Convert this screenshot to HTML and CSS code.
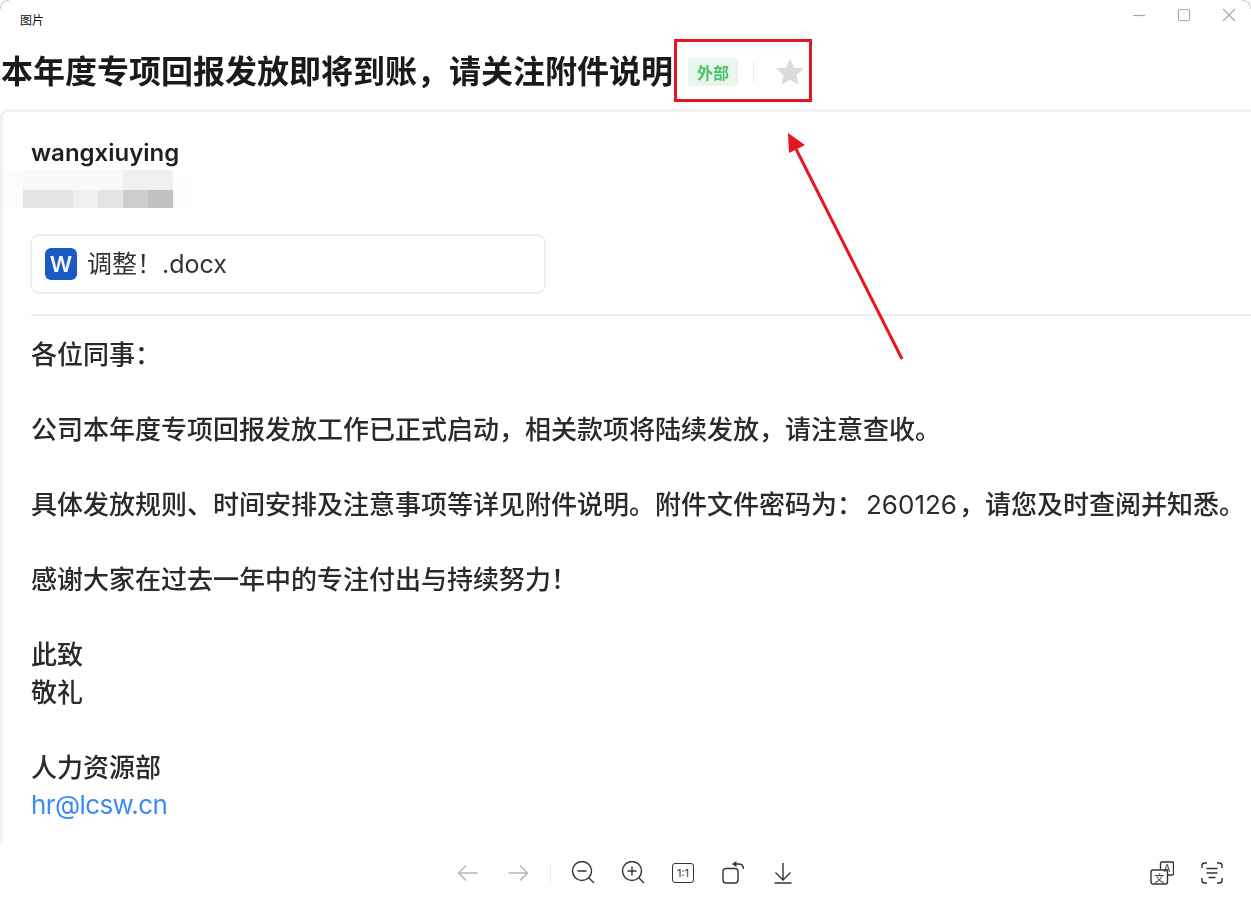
FILE: index.html
```html
<!DOCTYPE html>
<html lang="zh-CN">
<head>
<meta charset="utf-8">
<title>图片</title>
<link rel="stylesheet" href="styles.css">
</head>
<body>
<div class="window">
  <i class="corner corner-l"></i><i class="corner corner-r"></i>
  <header class="titlebar">
    <span class="app-name">图片</span>
    <div class="win-controls">
      <svg viewBox="0 0 14 14" width="14" height="14"><path d="M1 7.5h12"/></svg>
      <svg viewBox="0 0 14 14" width="14" height="14"><rect x="1.5" y="1.5" width="11" height="11" rx="1.5"/></svg>
      <svg viewBox="0 0 14 14" width="14" height="14"><path d="M1 1l12 12M13 1L1 13"/></svg>
    </div>
  </header>
  <div class="subject-row">
    <h1 class="subject">本年度专项回报发放即将到账，请关注附件说明</h1>
    <span class="badge">外部</span>
    <span class="subject-sep"></span>
    <svg class="star" viewBox="0 0 30 30" width="30" height="30"><path d="M15 1.5l4 9.2 10 .9-7.6 6.6 2.3 9.8L15 22.8 6.3 28l2.3-9.8L1 11.6l10-.9z"/></svg>
  </div>
  <main class="card">
    <div class="sender">wangxiuying</div>
    <div class="mosaic">
      <i class="t1"></i><i class="t2"></i><i class="t2"></i><i class="t2"></i><i class="t2"></i><i class="t3"></i><i class="t3"></i><i class="t0"></i>
      <i class="t1"></i><i class="t4"></i><i class="t4"></i><i class="t3"></i><i class="t5"></i><i class="t6"></i><i class="t7"></i><i class="t0"></i>
    </div>
    <div class="attachment">
      <span class="word-icon">W</span>
      <span class="file-name">调整！.docx</span>
    </div>
    <hr class="divider">
    <div class="body-text">
      <p>各位同事：</p>
      <p>公司本年度专项回报发放工作已正式启动，相关款项将陆续发放，请注意查收。</p>
      <p class="nowrap">具体发放规则、时间安排及注意事项等详见附件说明。附件文件密码为：<span class="num">260126</span>，请您及时查阅并知悉。</p>
      <p>感谢大家在过去一年中的专注付出与持续努力！</p>
      <p>此致<br>敬礼</p>
      <p>人力资源部<br><a class="mail" href="#">hr@lcsw.cn</a></p>
    </div>
  </main>
  <footer class="toolbar">
    <div></div>
    <div class="tools">
      <svg class="tool muted" viewBox="0 0 24 24" width="24" height="24"><path d="M21.5 12h-19M10 4.5L2.5 12l7.5 7.5"/></svg>
      <svg class="tool muted" viewBox="0 0 24 24" width="24" height="24"><path d="M2.5 12h19M14 4.5l7.5 7.5-7.5 7.5"/></svg>
      <span class="tool-sep"></span>
      <svg class="tool" viewBox="0 0 24 24" width="24" height="24"><circle cx="11" cy="10" r="9.5"/><path d="M18 17l5 5M6.5 10h9"/></svg>
      <svg class="tool" viewBox="0 0 24 24" width="24" height="24"><circle cx="11" cy="10" r="9.5"/><path d="M18 17l5 5M6.5 10h9M11 5.5v9"/></svg>
      <span class="ratio">1:1</span>
      <svg class="tool" viewBox="0 0 24 24" width="24" height="24"><rect x="2" y="7.5" width="15" height="14.5" rx="3"/><path d="M14 3h3.5c3 0 5 2 5 5"/><path class="fill" d="M11 3l4.5-3v6z"/></svg>
      <svg class="tool" viewBox="0 0 24 24" width="24" height="24"><path d="M12 2v17M4.5 11.500l7.500 7.500 7.500-7.500M3.500 22h17"/></svg>
    </div>
    <div class="tools tools-right">
      <svg class="tool" viewBox="0 0 24 24" width="24" height="24"><path d="M10.500 8V2.500a1.500 1.500 0 0 1 1.500-1.500h10a1.500 1.500 0 0 1 1.500 1.500v10a1.500 1.500 0 0 1-1.500 1.500h-4"/><rect x="1" y="9" width="16.500" height="14" rx="2"/><text class="glyph" x="17" y="11">A</text><text class="glyph" x="9.200" y="20.500">文</text></svg>
      <svg class="tool" viewBox="0 0 24 24" width="24" height="24"><path d="M2 7V4.500A2.500 2.500 0 0 1 4.500 2H7M17 2h2.500A2.500 2.500 0 0 1 22 4.500V7M22 17v2.500a2.500 2.500 0 0 1-2.500 2.500H17M7 22H4.500A2.500 2.500 0 0 1 2 19.500V17M6.500 7.500h11M6.500 12h11M8.500 16.500h7"/></svg>
    </div>
  </footer>
  <div class="callout"></div>
  <svg class="arrow" viewBox="0 0 1251 903" width="1251" height="903"><path class="arrow-line" d="M902 359L796 149"/><path class="arrow-head" d="M788 133l17 12-16 8z"/></svg>
</div>
</body>
</html>
```
FILE: styles.css
```css
* { box-sizing: border-box; }
html, body { margin: 0; height: 100%; background: #fff; }
body { font-family: Inter, "Noto Sans CJK SC", sans-serif; color: #222; overflow: hidden; }

.window { position: relative; width: 1251px; height: 903px; display: flex; flex-direction: column; overflow: hidden; background: #fff; }
.corner { position: absolute; top: 0; width: 9px; height: 9px; border-top: 1px solid #cfcfcf; }
.corner-l { left: 0; border-left: 1px solid #cfcfcf; border-top-left-radius: 8px; }
.corner-r { right: 0; border-right: 1px solid #cfcfcf; border-top-right-radius: 8px; }

.titlebar { height: 38px; flex: none; display: flex; justify-content: space-between; align-items: center; padding: 0 15px 0 20px; }
.app-name { font-family: "Noto Sans CJK SC", sans-serif; font-size: 12px; color: #111; }
.win-controls { display: flex; gap: 31px; margin-top: -8px; }
.win-controls svg { fill: none; stroke: #a8a8a8; stroke-width: 1.2; }

.subject-row { height: 71px; flex: none; display: flex; align-items: center; padding: 0 0 3px 1px; }
.subject { margin: 0 0 7px; font-family: "Noto Sans CJK SC", sans-serif; font-size: 32px; line-height: 40px; font-weight: 700; color: #1a1a1a; white-space: nowrap; filter: blur(.5px); }
.badge { margin-left: 15px; width: 50px; height: 28px; display: flex; align-items: center; justify-content: center; background: #e8f7ec; border-radius: 3px; font-family: "Noto Sans CJK SC", sans-serif; font-size: 16px; font-weight: 700; color: #4cc06a; filter: blur(.4px); }
.subject-sep { margin-left: 15px; width: 1px; height: 20px; background: #eaeaea; }
.star { margin-left: 21px; fill: #dadbdd; filter: blur(.4px); }

.card { flex: 1; min-height: 0; overflow: hidden; border-top: 3px solid #f1f1f1; border-left: 3px solid #f1f1f1; border-top-left-radius: 8px; padding-left: 28px; }
.sender { margin-top: 25px; font-size: 24px; line-height: 32px; font-weight: 600; color: #1f1f1f; filter: blur(.5px); }
.mosaic { margin: 1px 0 0 -33px; width: 200px; height: 38px; display: grid; grid-template-columns: repeat(8, 25px); grid-template-rows: 20px 18px; }
.t0 { background: #fefefe; }
.t1 { background: #fcfcfc; }
.t2 { background: #f9f9f9; }
.t3 { background: #f0f0f0; }
.t4 { background: #e2e3e3; }
.t5 { background: #e4e4e4; }
.t6 { background: #cdcdcd; }
.t7 { background: #c2c2c2; }

.attachment { margin: 26px 0 0 -1px; width: 516px; height: 60px; display: flex; align-items: center; gap: 10px; padding-left: 13px; border: 2px solid #eeeeee; border-radius: 9px; }
.word-icon { width: 32px; height: 32px; display: flex; align-items: center; justify-content: center; background: #1a5bbf; border-radius: 6px; font-size: 22px; font-weight: 600; color: #f4f7ff; filter: blur(.4px); }
.file-name { font-size: 25px; line-height: 32px; color: #333; filter: blur(.5px); }
.divider { margin: 20px 0 0; height: 2px; border: 0; background: #eeeeee; }

.body-text { margin-top: 20px; font-size: 26px; line-height: 37.5px; color: #2a2a2a; font-weight: 500; filter: blur(.5px); }
.body-text p { margin: 0 0 37.5px; }
.nowrap { white-space: nowrap; }
.num { margin: 0 2px 0 3px; font-weight: 400; }
.mail { color: #3b8cf0; text-decoration: none; letter-spacing: -.6px; font-weight: 400; }

.toolbar { height: 60px; flex: none; background: #fff; display: grid; grid-template-columns: 1fr auto 1fr; align-items: center; padding: 0 27px; }
.tools { display: flex; align-items: center; gap: 26px; }
.tools-right { justify-content: flex-end; }
.tool { fill: none; stroke: #333; stroke-width: 1.4; }
.tool.muted { stroke: #b5b5b5; }
.tool .fill { fill: #333; stroke: none; }
.tool .glyph { fill: #333; stroke: none; font-family: "Noto Sans CJK SC", sans-serif; font-size: 10px; text-anchor: middle; }
.tool-sep { width: 1px; height: 20px; background: #ececec; margin: 0 -6px; }
.ratio { width: 22px; height: 20px; margin: 0 1px; display: flex; align-items: center; justify-content: center; border: 1.5px solid #333; border-radius: 3px; font-size: 11px; color: #333; }

.callout { position: absolute; left: 674px; top: 39px; width: 138px; height: 63px; border: 3px solid #e8141f; }
.arrow { position: absolute; left: 0; top: 0; pointer-events: none; }
.arrow-line { stroke: #e8141f; stroke-width: 3; fill: none; }
.arrow-head { fill: #e8141f; }
```
